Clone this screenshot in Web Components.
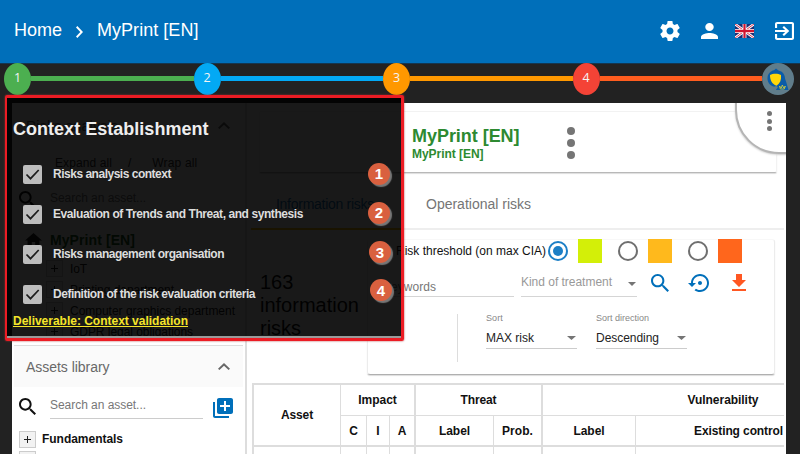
<!DOCTYPE html>
<html lang="en">
<head>
<meta charset="utf-8">
<title>MyPrint [EN]</title>
<style>
html,body{margin:0;height:454px;width:800px;overflow:hidden;background:#222;font:12px/1 "Liberation Sans",Arial,sans-serif;color:#222}
</style>
</head>
<body>
<risk-app></risk-app>
<script>
const define = (name, html, after) => {
  const t = document.createElement('template');
  t.innerHTML = html;
  customElements.define(name, class extends HTMLElement {
    constructor(){ super(); this.attachShadow({mode:'open'}); }
    connectedCallback(){
      if (this.shadowRoot.childNodes.length) return;
      this.shadowRoot.append(t.content.cloneNode(true));
      if (after) after(this, this.shadowRoot);
    }
  });
};

/* One line of text tracked to a fixed width given by w */
define('t-line', `<style>:host{display:block;white-space:nowrap;flex:none;width:max-content;line-height:16px}</style><slot></slot>`, el => {
  const w = +el.getAttribute('w');
  if (w) {
    const n = el.getBoundingClientRect().width;
    el.style.letterSpacing = ((w - n) / el.textContent.length) + 'px';
  }
});

const ICONS = {
  gear:['0 0 24 24','<path d="M19.43 12.98c.04-.32.07-.64.07-.98s-.03-.66-.07-.98l2.11-1.65c.19-.15.24-.42.12-.64l-2-3.46c-.12-.22-.39-.3-.61-.22l-2.49 1c-.52-.4-1.08-.73-1.69-.98l-.38-2.65C14.46 2.18 14.25 2 14 2h-4c-.25 0-.46.18-.49.42l-.38 2.65c-.61.25-1.17.59-1.69.98l-2.49-1c-.23-.09-.49 0-.61.22l-2 3.46c-.13.22-.07.49.12.64l2.11 1.65c-.04.32-.07.65-.07.98s.03.66.07.98l-2.11 1.65c-.19.15-.24.42-.12.64l2 3.46c.12.22.39.3.61.22l2.49-1c.52.4 1.08.73 1.69.98l.38 2.65c.03.24.24.42.49.42h4c.25 0 .46-.18.49-.42l.38-2.65c.61-.25 1.17-.59 1.69-.98l2.49 1c.23.09.49 0 .61-.22l2-3.46c.12-.22.07-.49-.12-.64l-2.11-1.65zM12 15.5c-1.93 0-3.5-1.57-3.5-3.5s1.57-3.5 3.5-3.5 3.5 1.57 3.5 3.5-1.57 3.5-3.5 3.5z"/>'],
  person:['4 4 16 16','<path d="M12 12c2.21 0 4-1.79 4-4s-1.79-4-4-4-4 1.79-4 4 1.79 4 4 4zm0 2c-2.67 0-8 1.34-8 4v2h16v-2c0-2.66-5.33-4-8-4z"/>'],
  exit:['3 3 18 18','<path d="M10.09 15.59L11.5 17l5-5-5-5-1.41 1.41L12.67 11H3v2h9.67l-2.58 2.59zM19 3H5c-1.11 0-2 .9-2 2v4h2V5h14v14H5v-4H3v4c0 1.1.89 2 2 2h14c1.1 0 2-.9 2-2V5c0-1.1-.9-2-2-2z"/>'],
  search:['3 3 17.5 17.5','<path d="M15.5 14h-.79l-.28-.27C15.41 12.59 16 11.11 16 9.5 16 5.91 13.09 3 9.5 3S3 5.91 3 9.5 5.91 16 9.5 16c1.61 0 3.09-.59 4.23-1.57l.27.28v.79l5 4.99L20.49 19l-4.99-5zm-6 0C7.01 14 5 11.99 5 9.5S7.01 5 9.5 5 14 7.01 14 9.5 11.99 14 9.5 14z"/>'],
  right:['8.59 6 7.41 12','<path d="M10 6L8.59 7.41 13.17 12l-4.58 4.59L10 18l6-6z"/>'],
  up:['6 8 12 7.41','<path d="M12 8l-6 6 1.41 1.41L12 10.83l4.59 4.58L18 14z"/>'],
  restore:['0 3 21 18','<path d="M14 12c0-1.1-.9-2-2-2s-2 .9-2 2 .9 2 2 2 2-.9 2-2zm-2-9c-4.97 0-9 4.03-9 9H0l4 4 4-4H5c0-3.87 3.13-7 7-7s7 3.13 7 7-3.13 7-7 7c-1.51 0-2.91-.49-4.06-1.3l-1.42 1.44C8.04 20.3 9.94 21 12 21c4.97 0 9-4.03 9-9s-4.03-9-9-9z"/>'],
  download:['5 3 14 17','<path d="M19 9h-4V3H9v6H5l7 7 7-7zM5 18v2h14v-2H5z"/>'],
  addlib:['2 2 20 20','<path d="M4 6H2v14c0 1.1.9 2 2 2h14v-2H4V6zm16-4H8c-1.1 0-2 .9-2 2v12c0 1.1.9 2 2 2h12c1.1 0 2-.9 2-2V4c0-1.1-.9-2-2-2zm-1 9h-4v4h-2v-4H9V9h4V5h2v4h4v2z"/>'],
  home:['2 3 20 17','<path d="M10 20v-6h4v6h5v-8h3L12 3 2 12h3v8z"/>'],
  check:['0 0 19 19','<path d="M3.5 9.5l4 4.2L15.7 5" fill="none" stroke="#1c1c1c" stroke-width="1.7"/>'],
  down:['0 0 8 4','<path d="M0 0h8L4 4z"/>'],
  flag:['0 0 60 42','<path fill="#1b2f75" d="M0 0h60v42H0z"/><path d="M0 0l60 42M60 0L0 42" stroke="#fff" stroke-width="8"/><path d="M0 0l60 42M60 0L0 42" stroke="#d8304a" stroke-width="3"/><path d="M30 0v42M0 21h60" stroke="#fff" stroke-width="12"/><path d="M30 0v42M0 21h60" stroke="#d0152f" stroke-width="7"/>'],
  logo:['0 0 32 32','<circle cx="16" cy="16" r="16" fill="#607d8b"/><path fill="#0a5ca8" d="M14 5.500l2.500 2c4 .8 6.500 4 6.500 8l1.500 4.500 2 7H13l1.500-3C9 24 5.500 20 5.500 15.500S8.500 8 12 7.300z"/><path fill="#ffd60a" d="M8 12c3-1.800 8-1.800 11 0 .5 5-1 8.500-4.500 10.800-4.500-2-6.500-5.300-6.500-10.800z"/><path d="M17.500 23l1.800 2 1-3 1.500 3 1.500-2-1 3h-4z" stroke="#d9d235" stroke-width=".8" fill="none"/><path d="M11 24.500l3-1.500 2 1-2.500 3.500h-2z" fill="#607d8b"/>']
};
define('x-icon', `<style>:host{display:block;flex:none}svg{display:block;width:100%;height:100%}</style><svg fill="currentColor" preserveAspectRatio="none"></svg>`, (el, r) => {
  const [vb, body] = ICONS[el.getAttribute('n')], s = r.querySelector('svg');
  s.setAttribute('viewBox', vb); s.innerHTML = body;
  el.style.width = el.getAttribute('w') + 'px';
  el.style.height = el.getAttribute('h') + 'px';
});

define('more-dots', `<style>:host{display:flex;flex-direction:column;gap:var(--g,4px)}i{width:var(--d,8px);height:var(--d,8px);border-radius:50%;background:#757575}</style><i></i><i></i><i></i>`);

define('top-bar', `<style>
:host{display:flex;align-items:center;height:63px;box-sizing:border-box;padding:0 6px 3px 14px;background:#006fba;color:#fff;font-size:18px}
.c{margin:3px 14px 0 14px}.s{flex:1}.r{display:flex;align-items:center;margin-top:2px}
</style>
<t-line w="48">Home</t-line><x-icon class="c" n="right" w="7" h="12"></x-icon><t-line w="101.500">MyPrint [EN]</t-line><div class="s"></div>
<div class="r"><x-icon n="gear" w="24" h="24"></x-icon><x-icon n="person" w="17" h="16" style="margin-left:19px"></x-icon><x-icon n="flag" w="19" h="14" style="margin-left:17px"></x-icon><x-icon n="exit" w="19" h="18" style="margin-left:21px"></x-icon></div>`);

define('step-line', `<style>
:host{display:flex;align-items:center;height:40px;box-sizing:border-box;padding:0 6px 9px 4px;color:#f4f4f4;font:12.500px "Open Sans",sans-serif;background:linear-gradient(#143650 1px,#222 1px)}
b{font-weight:400;width:27px;height:32px;border-radius:50%;display:grid;place-items:center;flex:none;box-sizing:border-box;padding-bottom:3px}
i{flex:1;height:5px}
</style>
<b style="background:#4caf50">1</b><i style="background:#4caf50"></i><b style="background:#03a9f4">2</b><i style="background:#03a9f4"></i><b style="background:#ff9800">3</b><i style="background:#ff9800"></i><b style="background:#f44336">4</b><i style="background:#ff5d1f"></i><x-icon n="logo" w="32" h="32"></x-icon>`);

define('tree-row', `<style>
:host{display:flex;align-items:center;height:21px;gap:7px;padding-left:34px}
:host([lib]){height:20px;padding-left:7px;font-weight:700;color:#111}
.p{width:15px;height:15px;border:1px solid #ccc;background:#f2f2f2;flex:none;display:grid;place-items:center}
:host([lib]) .p{margin-right:-1px}
svg{display:block}
</style><span class="p"><svg width="7" height="7"><path d="M3.500 0v7M0 3.500h7" stroke="#222"/></svg></span><slot></slot>`);

define('panel-head', `<style>
:host{display:flex;align-items:center;justify-content:space-between;height:41px;margin:0 2px;padding:0 13px 0 12px;background:#fafafa;color:#686868;font-size:14px}
</style><slot></slot><x-icon n="up" w="12" h="7"></x-icon>`);

define('search-row', `<style>
:host{display:flex;align-items:flex-start;height:33px;padding:0 0 0 7px;color:#111}
.f{width:153px;flex:none;height:21px;margin:0 10px 0 14px;border-bottom:1px solid #ccc;color:#777}
</style><x-icon n="search" w="17" h="17" style="margin-top:1px"></x-icon><div class="f"><t-line w="96">Search an asset...</t-line></div><slot></slot>`);

define('side-bar', `<style>
:host{display:block;width:235px;box-sizing:border-box;height:351px;overflow:hidden;background:#fff;border-right:2px solid #ddd;padding-top:2px;flex:none}
.e{display:flex;gap:16px;padding-left:43px;height:33px;align-items:center;color:#333}
.r{display:flex;gap:8px;padding-left:13px;height:26px;align-items:center;font-weight:700;font-size:14px;color:#1d5c20}
.tree{height:92px;overflow:hidden;border-bottom:1px solid #ddd;margin:0 2px}
</style>
<panel-head><t-line w="92">Risks analysis</t-line></panel-head>
<div class="e"><t-line w="57">Expand all</t-line><span>/</span><t-line w="45" style="margin-left:5px">Wrap all</t-line></div>
<search-row style="padding-top:11px;height:37px"></search-row>
<div class="r"><x-icon n="home" w="17" h="14" style="color:#222"></x-icon><t-line w="85">MyPrint [EN]</t-line></div>
<div class="tree">
<tree-row style="margin:5px 0 0 -2px"><t-line w="17">IoT</t-line></tree-row><tree-row style="margin-left:-2px"><t-line w="104">Printing department</t-line></tree-row><tree-row style="margin-left:-2px"><t-line w="165">Computer graphics department</t-line></tree-row><tree-row style="margin-left:-2px"><t-line w="123">GDPR legal obligations</t-line></tree-row></div>
<panel-head><t-line w="83.500">Assets library</t-line></panel-head>
<search-row style="padding-top:10px;height:32px"><x-icon n="addlib" w="20" h="20" style="color:#006fba;margin-top:1px"></x-icon></search-row>
<tree-row lib><t-line w="81">Fundamentals</t-line></tree-row><tree-row lib></tree-row>`);

define('title-card', `<style>
:host{display:flex;align-items:flex-start;height:62px;margin:8px 9px 0 12px;box-sizing:border-box;padding:15px 0 0 152px;border:1px solid #f2f2f2;border-bottom:1px solid #b8b8b8;border-radius:2px;box-shadow:0 1px 1px #ddd;color:#2d8a31;font-weight:700}
.n{width:155px}
</style><div class="n"><t-line w="107.500" style="font-size:18px;line-height:19px">MyPrint [EN]</t-line><t-line w="71.500" style="line-height:16px">MyPrint [EN]</t-line></div><more-dots></more-dots>`);

define('tab-row', `<style>
:host{display:flex;height:57px;margin:0 2px 0 4px;border-bottom:2px solid #eee;box-sizing:border-box;font-size:14px;color:#757575}
div{width:150px;box-sizing:border-box;padding-top:23px;padding-left:25px}
.a{border-bottom:2px solid #ffc107;margin-bottom:-2px;color:#1976b8}
</style><div class="a"><t-line w="98">Information risks</t-line></div><div><t-line w="105">Operational risks</t-line></div>`);

define('risk-level', `<style>
:host{display:flex;align-items:center;gap:10px}
.o{width:20px;height:20px;border:2px solid #6f6f6f;border-radius:50%;box-sizing:border-box;display:grid;place-items:center}
:host([on]) .o{border-color:#1c7fc6}:host([on]) .o::after{content:"";width:10px;height:10px;border-radius:50%;background:#1c7fc6}
.s{width:24px;height:24px;background:var(--c)}
</style><span class="o"></span><span class="s"></span>`);

define('select-box', `<style>
:host{display:block;width:91px}
.l{font-size:9px;color:#888}
.v{display:flex;justify-content:space-between;align-items:center;height:23px;border-bottom:1px solid #ccc;color:#222;box-sizing:border-box;padding-top:1px;padding-right:1px}
</style><div class="l"><slot name="label"></slot></div><div class="v"><slot></slot><x-icon n="down" w="9" h="4" style="color:#757575"></x-icon></div>`);

define('filter-card', `<style>
:host{display:block;width:408px;height:136px;box-sizing:border-box;border:1px solid #ececec;border-top-color:#f8f8f8;border-bottom:1px solid #b0b0b0;border-radius:3px;box-shadow:0 1px 1px #ddd;flex:none}
.a{display:flex;align-items:center;height:24px;padding-left:28px;margin-top:-1px}
.a risk-level+risk-level{margin-left:16px}
.b{display:flex;padding-left:15px;margin-top:11px;height:23px}
.k{width:131px;margin-right:7px;height:23px;border-bottom:1px solid #d5d5d5;color:#777;box-sizing:border-box}
.t{width:116px;height:23px;box-sizing:border-box;border-bottom:1px solid #d5d5d5;color:#999;display:flex;justify-content:space-between;padding:0 1px 0 0}
.c{display:flex;margin-top:17px;padding-left:89px}
.c .bar{width:28px;height:48px;border-left:1px solid #ddd}
</style>
<div class="a"><t-line w="150" style="color:#111;margin-right:2px">Risk threshold (on max CIA)</t-line><risk-level on style="--c:#d3ef08"></risk-level><risk-level style="--c:#ffb91c"></risk-level><risk-level style="--c:#ff661c"></risk-level></div>
<div class="b"><div class="k"><t-line w="53" style="padding-top:5px">Keywords</t-line></div><div class="t"><t-line w="91">Kind of treatment</t-line><x-icon n="down" w="8" h="4" style="color:#757575;margin-top:8px"></x-icon></div>
<x-icon n="search" w="18" h="18" style="color:#006fba;margin-left:14px"></x-icon><x-icon n="restore" w="21" h="18" style="color:#006fba;margin-left:19px"></x-icon><x-icon n="download" w="14" h="17" style="color:#ff5722;margin-left:23px"></x-icon></div>
<div class="c"><span class="bar"></span><select-box style="margin-top:-4px"><t-line slot="label" w="17">Sort</t-line><t-line w="48">MAX risk</t-line></select-box><select-box style="margin:-4px 0 0 19px"><t-line slot="label" w="53">Sort direction</t-line><t-line w="63">Descending</t-line></select-box></div>`);

define('risk-table', `<style>
:host{display:block;margin:0 2px 0 5px;height:71px;overflow:hidden;font-weight:700;color:#111}
.g{display:grid;width:652px;grid-template-columns:87px 26px 23px 26px 78px 49px 93px 268px;grid-template-rows:31px 31px 10px;border-left:2px solid #ddd;border-top:2px solid #ddd;box-sizing:border-box}
.g>div{display:grid;place-items:center;border-right:1px solid #ddd;border-bottom:1px solid #ddd;overflow:hidden}
.g>.e{border-right-width:2px}.g>.r{border-bottom-width:2px}
</style><div class="g">
<div class="r" style="grid-row:span 2"><t-line w="32">Asset</t-line></div><div class="e" style="grid-column:span 3"><t-line w="38.500">Impact</t-line></div><div class="e" style="grid-column:span 2"><t-line w="36">Threat</t-line></div><div style="grid-column:span 2"><t-line w="71">Vulnerability</t-line></div>
<div class="r"><t-line>C</t-line></div><div class="r"><t-line>I</t-line></div><div class="r e"><t-line>A</t-line></div><div class="r"><t-line w="31">Label</t-line></div><div class="r e"><t-line w="31">Prob.</t-line></div><div class="r"><t-line w="31">Label</t-line></div><div class="r" style="place-items:center start;padding-left:58px"><t-line w="89">Existing control</t-line></div>
<div></div><div></div><div></div><div class="e"></div><div></div><div class="e"></div><div></div><div></div>
</div>`);

define('risk-content', `<style>
:host{display:block;flex:1;min-width:0;background:#fff;height:351px;overflow:hidden;position:relative}
.m{display:flex;height:153px;padding-top:9px;padding-left:13px;box-sizing:border-box}
.n{width:107px;font-size:20px;line-height:23px;padding-top:32px;color:#111}
.q{position:absolute;right:-3px;top:-3px;width:50px;height:50px;border:2px solid #b5b5b5;border-radius:0 0 0 44px;background:#fff;box-shadow:0 1px 2px #ccc}
.q more-dots{--d:5px;--g:2.500px;margin:9px 0 0 30px}
</style>
<title-card></title-card><tab-row></tab-row>
<div class="m"><div class="n">163<br>information<br>risks</div><filter-card></filter-card></div>
<risk-table></risk-table>
<div class="q"><more-dots></more-dots></div>`);

define('check-item', `<style>
:host{display:flex;align-items:center;height:40px;gap:11px;position:relative;padding-left:16px}
.b{width:19px;height:19px;background:#bdbdbd;border-radius:2px}
.n{position:absolute;left:calc(361px + var(--dx,0px));top:calc(8.500px + var(--dy,0px));width:22px;height:22px;border-radius:50%;background:#d9603f;color:#fff;font-size:15px;display:grid;place-items:center;box-shadow:2px 2px 1px #777}
</style><span class="b"><x-icon n="check" w="19" h="19"></x-icon></span><slot></slot><span class="n"></span>`, (el, r) => { r.querySelector('.n').textContent = el.getAttribute('n'); });

define('context-popup', `<style>
:host{display:block;position:absolute;left:5px;top:95px;width:399px;height:246px;box-sizing:border-box;border:solid #ec1c24;border-width:3px 3px 3px 2px;border-radius:2px;font-weight:700;font-size:12px;color:#ddd;box-shadow:0 0 2px #a33}
.p{height:238px;background:rgba(0,0,0,.9);border-bottom:2px solid #9a9a9a}
.h{padding:21px 0 0 6px;height:35px}
.d{padding:0 0 0 6px}
</style><div class="p"><div class="h"><t-line w="195.500" style="font-size:18px;line-height:20px;color:#eee">Context Establishment</t-line></div>
<div style="height:160px">
<check-item n="1"><t-line w="118">Risks analysis context</t-line></check-item>
<check-item n="2" style="--dy:-1px"><t-line w="250">Evaluation of Trends and Threat, and synthesis</t-line></check-item>
<check-item n="3" style="--dx:1px;--dy:-1.500px"><t-line w="171">Risks management organisation</t-line></check-item>
<check-item n="4" style="--dx:2px;--dy:-3.500px"><t-line w="202">Definition of the risk evaluation criteria</t-line></check-item></div>
<div class="d"><t-line w="175" style="color:#f5e52a;text-decoration:underline;line-height:14px">Deliverable: Context validation</t-line></div></div>`);

define('risk-app', `<style>
:host{display:block;position:relative;width:800px;height:454px;overflow:hidden}
.m{display:flex;margin:0 14px 0 12px}
</style><top-bar></top-bar><step-line></step-line><div class="m"><side-bar></side-bar><risk-content></risk-content></div><context-popup></context-popup>`);
</script>
</body>
</html>
